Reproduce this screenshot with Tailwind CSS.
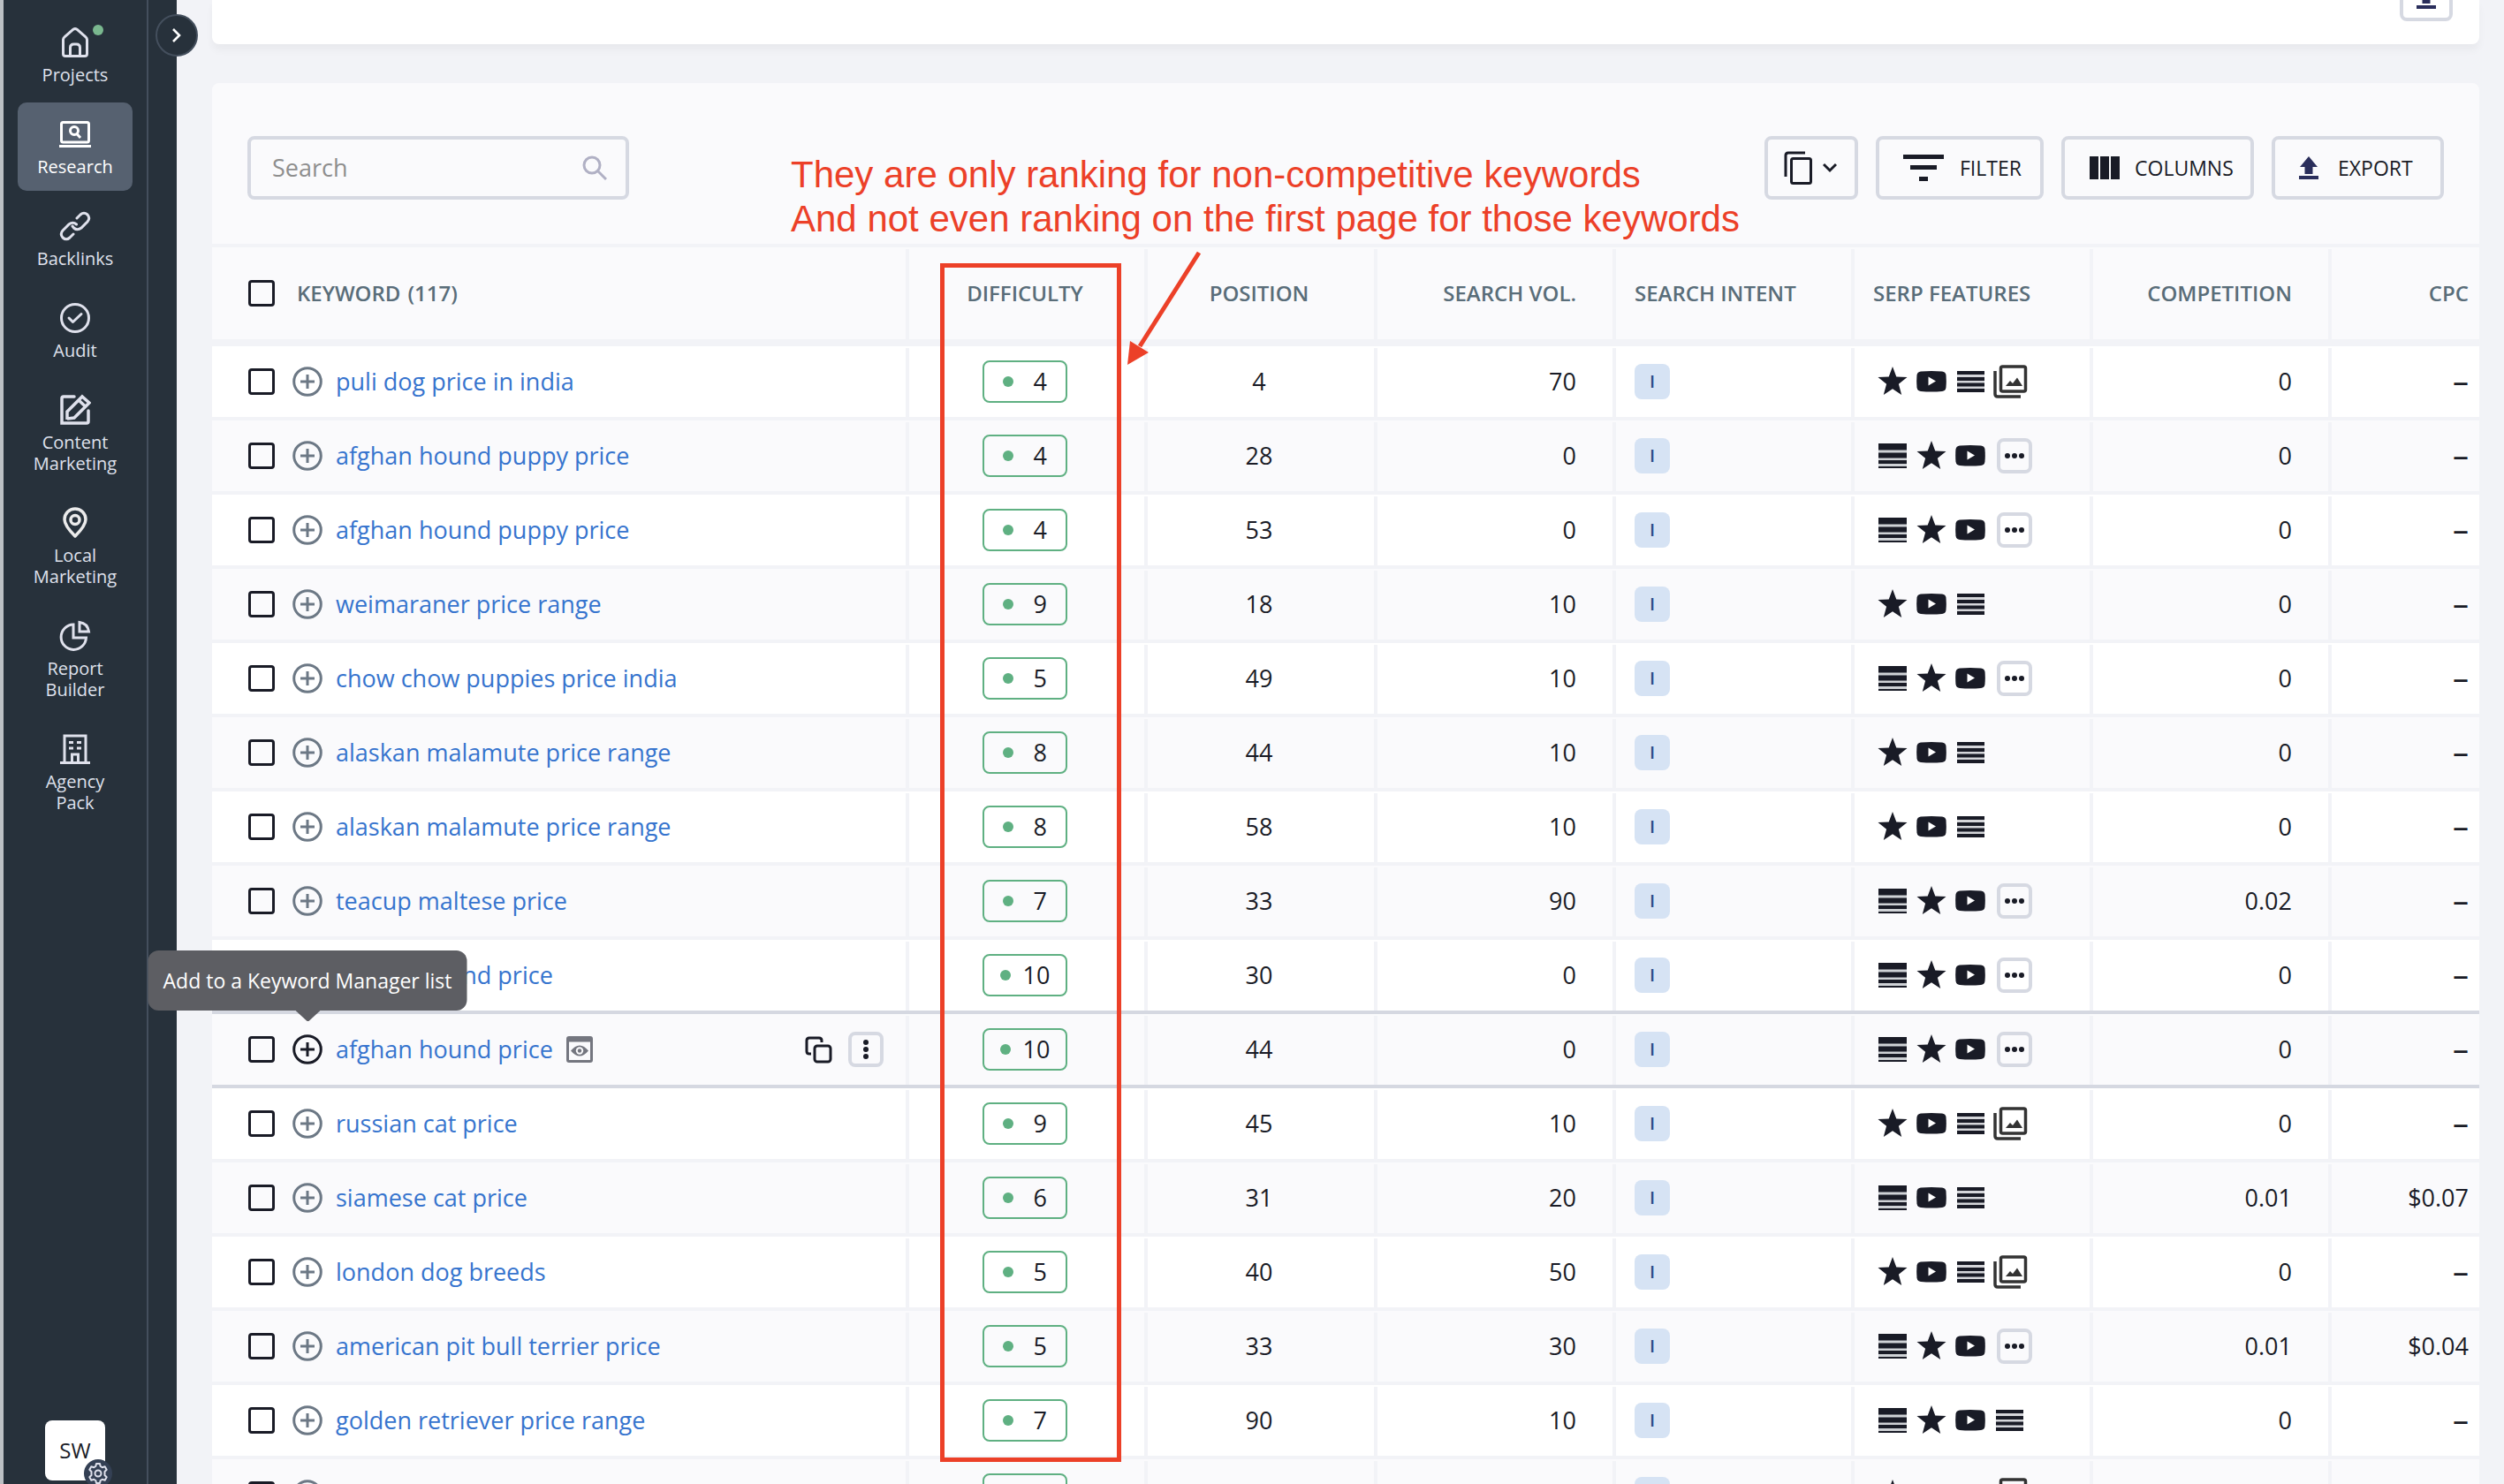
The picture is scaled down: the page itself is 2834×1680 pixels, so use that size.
<!DOCTYPE html>
<html lang="en">
<head>
<meta charset="utf-8">
<title>Keyword Research</title>
<script src="https://cdn.jsdelivr.net/npm/@tailwindcss/browser@4"></script>
</head>
<body class="relative flex h-screen overflow-hidden bg-[#f2f3f7] font-['Open_Sans','Noto_Sans',sans-serif] text-[27px] text-[#191b26]">

<svg class="hidden" aria-hidden="true">
  <symbol id="star" viewBox="0 0 36 36"><path fill="currentColor" d="M18 1l4.300 11.600 12.200.5-9.600 7.700 3.300 12.200L18 26.200 7.800 33l3.300-12.200-9.600-7.700 12.200-.5z"/></symbol>
  <symbol id="video" viewBox="0 0 36 36"><path fill="currentColor" d="M6 6.500q12-1 24 0 4 .5 4.500 4 .6 7 0 14-.5 4-4.500 4.500-12 1-24 0-4-.5-4.500-4.500-.6-7 0-14 .5-3.500 4.500-4z"/><path fill="#fff" d="M14.500 12.500v10l8.500-5z"/></symbol>
  <symbol id="lines" viewBox="0 0 36 36"><path fill="#d5d6da" d="M3 6h31v24H3z"/><path fill="currentColor" d="M3 6h31v4H3zm0 7h31v4H3zm0 6.500h31v4H3zM3 26h31v4H3z"/></symbol>
  <symbol id="thick" viewBox="0 0 36 36"><path fill="#cfd2d6" d="M2 4h32v28H2z"/><path fill="currentColor" d="M2 4h32v7.500H2zm0 10.500h32v6H2zm0 8.500h32v4H2zm0 7h32v2H2z"/></symbol>
  <symbol id="image" viewBox="0 0 40 40"><g fill="none" stroke="#333" stroke-width="3.500"><rect x="8.500" y="3" width="28" height="28" rx="2"/><path d="M2 8v26q0 3 3 3h26"/></g><path fill="#333" d="M14 25l5-6 3 3 5-6.500 6 9.500z"/></symbol>
  <symbol id="plus" viewBox="0 0 34 34"><g fill="none" stroke="currentColor" stroke-width="3"><circle cx="17" cy="17" r="15.300"/><path d="M17 9v16M9 17h16"/></g></symbol>
  <symbol id="upload" viewBox="0 0 22 26"><path fill="currentColor" d="M11 0l10 12h-5.500v8h-9v-8H1zM0 22h22v4H0z"/></symbol>
</svg>

<aside class="relative flex w-[200px] shrink-0 border-l-4 border-[#bcc0c4] bg-[#27313b]">
  <nav class="flex w-[164px] flex-col items-center border-r-2 border-[#444f5d] pt-3 text-[20px] leading-6 font-medium text-[#dfe1ec]">
    <div class="flex flex-1 flex-col gap-1 text-center">
      <a href="#" class="relative flex w-[130px] flex-col items-center gap-[7px] rounded-[10px] pt-[18px] pb-[15px]">
        <svg class="size-9" viewBox="0 0 36 36" fill="none" stroke="currentColor" stroke-width="3" stroke-linejoin="round"><path d="M4.500 15Q4.500 13 6 11.800L16 3.200q2-1.500 4 0L30 11.800q1.500 1.200 1.500 3.200V31q0 2.500-2.500 2.500H7Q4.500 33.500 4.500 31z"/><path d="M12.500 33V24q0-4 4-4h3q4 0 4 4v9"/></svg>
        <span class="absolute top-4 left-[85px] size-3 rounded-full bg-[#7ab88f]"></span>
        Projects</a>
      <a href="#" class="flex w-[130px] flex-col items-center gap-[7px] rounded-[10px] bg-[#566170] pt-[18px] pb-[15px] text-white">
        <svg class="size-9" viewBox="0 0 36 36" fill="none" stroke="currentColor" stroke-width="3"><rect x="2.500" y="4.500" width="31" height="22.500" rx="2"/><path d="M0 31.500h36"/><circle cx="17" cy="14" r="4.500"/><path d="M20 17.500l4 4.500"/></svg>
        Research</a>
      <a href="#" class="flex w-[130px] flex-col items-center gap-[7px] rounded-[10px] pt-[18px] pb-[15px]">
        <svg class="size-9" viewBox="0 0 36 36" fill="none" stroke="currentColor" stroke-width="3" stroke-linecap="round"><path d="M20 9l4-4q4-3.500 8 0 3.500 4 0 8l-7 7q-4.500 3.500-8.500 0l-1.500-2"/><path d="M16 27l-4 4q-4 3.500-8 0-3.500-4 0-8l7-7q4.500-3.500 8.500 0"/></svg>
        Backlinks</a>
      <a href="#" class="flex w-[130px] flex-col items-center gap-[7px] rounded-[10px] pt-[18px] pb-[15px]">
        <svg class="size-9" viewBox="0 0 36 36" fill="none" stroke="currentColor" stroke-width="3" stroke-linecap="round" stroke-linejoin="round"><circle cx="18" cy="18" r="15.500"/><path d="M11 18l4.500 4.500L25 13.500"/></svg>
        Audit</a>
      <a href="#" class="flex w-[130px] flex-col items-center gap-[7px] rounded-[10px] pt-[18px] pb-[15px]">
        <svg class="size-9" viewBox="0 0 36 36" fill="none" stroke="currentColor" stroke-width="3.500"><path stroke-linecap="round" d="M17 3H5Q3 3 3 5v28h28q2 0 2-2V19"/><path d="M9 29v-9L26 3l8 7-17 17-8 1zM22 7l8 7.500"/></svg>
        <span>Content<br>Marketing</span></a>
      <a href="#" class="flex w-[130px] flex-col items-center gap-[7px] rounded-[10px] pt-[18px] pb-[15px]">
        <svg class="size-9" viewBox="0 0 36 36" fill="none" stroke="#ebebeb" stroke-width="3.500" stroke-linejoin="round"><path d="M18 33Q6 21 6 14a12 12 0 0 1 24 0q0 7-12 19z"/><circle cx="18" cy="14.500" r="5"/></svg>
        <span>Local<br>Marketing</span></a>
      <a href="#" class="flex w-[130px] flex-col items-center gap-[7px] rounded-[10px] pt-[18px] pb-[15px]">
        <svg class="size-9" viewBox="0 0 36 36" fill="none" stroke="currentColor" stroke-width="3"><path d="M16 5v15h14.500A14.200 14.200 0 1 1 16 5z"/><path d="M23 2.500q9 1 10.500 10.500H23z"/></svg>
        <span>Report<br>Builder</span></a>
      <a href="#" class="flex w-[130px] flex-col items-center gap-[7px] rounded-[10px] pt-[18px] pb-[15px]">
        <svg class="size-9" viewBox="0 0 36 36" fill="none" stroke="currentColor" stroke-width="3"><path d="M6 33V3h24v30M1 33.500h34M14.500 33v-9h7v9M11 10.500h5M20 10.500h5M11 17h5M20 17h5"/></svg>
        <span>Agency<br>Pack</span></a>
    </div>
    <button type="button" class="relative mb-1 size-[68px] rounded-lg bg-white text-[24px] font-medium text-[#191b26]">SW
      <span class="absolute top-11 left-11 flex size-8 items-center justify-center rounded-full bg-[#344054] text-[#dfe1ec]">
        <svg class="size-6" viewBox="0 0 24 24" fill="none" stroke="currentColor" stroke-width="2" stroke-linejoin="round"><circle cx="12" cy="12" r="3.500"/><path d="M10 1h4l.7 3 2 1.200 3-.9 2 3.500L19.500 10v4l2.200 2.200-2 3.500-3-.9-2 1.200-.7 3h-4l-.7-3-2-1.200-3 .9-2-3.500L4.500 14v-4L2.300 7.800l2-3.500 3 .9 2-1.200z"/></svg>
      </span>
    </button>
  </nav>
  <button type="button" aria-label="Expand menu" class="absolute top-4 -right-6 flex size-12 items-center justify-center rounded-full border-2 border-[#444f5d] bg-[#27313b] text-white">
    <svg class="size-4" viewBox="0 0 16 16" fill="none" stroke="currentColor" stroke-width="2.600"><path d="M4 1l7 7-7 7"/></svg>
  </button>
</aside>

<main class="flex min-w-0 flex-1 flex-col gap-11 pr-7 pl-10">
  <section class="flex h-[50px] shrink-0 items-end justify-end rounded-b-lg bg-white pr-[30px] pb-[26px] shadow-[0_7px_8px_rgba(0,0,30,0.04)]">
    <button type="button" aria-label="Export chart" class="flex h-[60px] w-[60px] shrink-0 items-end justify-center rounded-lg border-4 border-[#d6d9e2] pb-2.5 text-[#2a2e5b]"><svg class="h-[26px] w-[22px]"><use href="#upload"/></svg></button>
  </section>

  <section class="rounded-t-lg bg-[#fafafc]">
    <div class="flex h-[186px] items-start justify-between border-b-4 border-[#f2f3f7] px-10 pt-[60px]">
      <label class="flex h-[72px] w-[432px] items-center rounded-lg border-4 border-[#d6d9e2] pr-[21px] pl-6">
        <input type="search" placeholder="Search" aria-label="Search keywords" class="min-w-0 flex-1 bg-transparent outline-none placeholder:text-[#8e8e8e]">
        <svg class="size-7 text-[#b0b0c4]" viewBox="0 0 28 28" fill="none" stroke="currentColor" stroke-width="3"><circle cx="11" cy="11" r="9"/><path d="M17.500 17.500L27 27"/></svg>
      </label>
      <div class="flex gap-5 text-[23px] font-medium">
        <button type="button" aria-label="Copy" class="flex h-[72px] w-[106px] items-center gap-3 rounded-lg border-4 border-[#d6d9e2] pl-[18px]">
          <svg class="h-10 w-8" viewBox="0 0 32 40" fill="none" stroke="currentColor" stroke-width="3"><path d="M2 30V6q0-3 3-3h19"/><rect x="8.500" y="9.500" width="22" height="28" rx="2"/></svg>
          <svg class="size-4" viewBox="0 0 16 16" fill="none" stroke="currentColor" stroke-width="3"><path d="M1 4l7 7 7-7"/></svg>
        </button>
        <button type="button" class="flex h-[72px] w-[190px] items-center gap-[18px] rounded-lg border-4 border-[#d6d9e2] pl-[27px]">
          <svg class="h-[30px] w-[46px]" viewBox="0 0 46 30" fill="currentColor"><path d="M0 0h46v5H0zM8 12h30v5H8zM18 25h10v5H18z"/></svg>FILTER</button>
        <button type="button" class="flex h-[72px] w-[218px] items-center gap-[17px] rounded-lg border-4 border-[#d6d9e2] pl-7">
          <svg class="h-[26px] w-[34px]" viewBox="0 0 34 26" fill="currentColor"><path d="M0 0h10v26H0zM12 0h10v26H12zM24 0h10v26H24z"/></svg>COLUMNS</button>
        <button type="button" class="flex h-[72px] w-[195px] items-center gap-[22px] rounded-lg border-4 border-[#d6d9e2] pl-[27px]">
          <svg class="h-[26px] w-[22px] text-[#2a2e5b]"><use href="#upload"/></svg>EXPORT</button>
      </div>
    </div>

    <table class="w-full table-fixed border-separate border-spacing-0">
      <colgroup><col><col class="w-[270px]"><col class="w-[260px]"><col class="w-[270px]"><col class="w-[270px]"><col class="w-[270px]"><col class="w-[270px]"><col class="w-[167px]"></colgroup>
      <thead>
        <tr class="text-[24px] text-[#596d79] *:h-[112px] *:border-b-8 *:border-[#f2f3f7] *:bg-[linear-gradient(#f2f3f7,#f2f3f7)] *:bg-[length:4px_calc(100%-2px)] *:bg-right-bottom *:bg-no-repeat *:font-semibold">
          <th class="pl-[41px] text-left"><label class="flex items-center gap-[25px]"><input type="checkbox" aria-label="Select all" class="size-[30px] appearance-none rounded-sm border-[3px] border-[#191b26]"><span class="flex gap-2"><span>KEYWORD</span><span>(117)</span></span></label></th>
          <th class="pr-2 text-center">DIFFICULTY</th>
          <th class="pr-2 text-center">POSITION</th>
          <th class="pr-[45px] text-right">SEARCH VOL.</th>
          <th class="pl-[21px] text-left">SEARCH INTENT</th>
          <th class="pl-[21px] text-left">SERP FEATURES</th>
          <th class="pr-[45px] text-right">COMPETITION</th>
          <th class="bg-none! pr-3 text-right">CPC</th>
        </tr>
      </thead>
      <tbody id="rows"></tbody>
    </table>
  </section>
</main>

<div class="pointer-events-none absolute top-[298px] left-[1064px] h-[1357px] w-[205px] border-[5px] border-[#ec4028]"></div>
<p class="pointer-events-none absolute top-[173px] left-[895px] font-['Liberation_Sans',Arial,sans-serif] text-[42px] leading-[50px] whitespace-nowrap text-[#ec4028]">They are only ranking for non-competitive keywords<br>And not even ranking on the first page for those keywords</p>
<svg class="pointer-events-none absolute top-[280px] left-[1270px] h-[140px] w-[100px]" viewBox="0 0 100 140"><path d="M87 6L20 112" stroke="#ec4028" stroke-width="5"/><path d="M6 133l3-27 21 13z" fill="#ec4028"/></svg>

<script>
  // keyword, difficulty, position, volume, SERP features, competition, CPC
  const data = [
    ['puli dog price in india', 4, 4, 70, 'star video lines image', '0', '–'],
    ['afghan hound puppy price', 4, 28, 0, 'thick star video more', '0', '–'],
    ['afghan hound puppy price', 4, 53, 0, 'thick star video more', '0', '–'],
    ['weimaraner price range', 9, 18, 10, 'star video lines', '0', '–'],
    ['chow chow puppies price india', 5, 49, 10, 'thick star video more', '0', '–'],
    ['alaskan malamute price range', 8, 44, 10, 'star video lines', '0', '–'],
    ['alaskan malamute price range', 8, 58, 10, 'star video lines', '0', '–'],
    ['teacup maltese price', 7, 33, 90, 'thick star video more', '0.02', '–'],
    ['afghan hound price', 10, 30, 0, 'thick star video more', '0', '–'],
    ['afghan hound price', 10, 44, 0, 'thick star video more', '0', '–'],
    ['russian cat price', 9, 45, 10, 'star video lines image', '0', '–'],
    ['siamese cat price', 6, 31, 20, 'thick video lines', '0.01', '$0.07'],
    ['london dog breeds', 5, 40, 50, 'star video lines image', '0', '–'],
    ['american pit bull terrier price', 5, 33, 30, 'thick star video more', '0.01', '$0.04'],
    ['golden retriever price range', 7, 90, 10, 'thick star video lines', '0', '–'],
    ['', '', '', '', 'star video lines image', '', ''],
  ];
  const active = 9;
  const feature = name => name === 'more'
    ? '<button type="button" aria-label="More features" class="ml-1 flex size-10 items-center justify-center rounded-lg border-4 border-[#d6d9e2]"><svg class="h-2 w-6" viewBox="0 0 24 8" fill="currentColor"><circle cx="4" cy="4" r="3"/><circle cx="12" cy="4" r="3"/><circle cx="20" cy="4" r="3"/></svg></button>'
    : name === 'image'
      ? '<svg class="size-10"><use href="#image"/></svg>'
      : `<svg class="size-9"><use href="#${name}"/></svg>`;
  const tooltip = '<span role="tooltip" class="absolute bottom-full left-1/2 z-10 mb-[27px] flex h-[68px] w-[361px] -translate-x-1/2 items-center justify-center rounded-xl bg-[#5d5e63] text-[23px] whitespace-nowrap text-white">Add to a Keyword Manager list<svg class="absolute top-full left-1/2 h-3 w-7 -translate-x-1/2" viewBox="0 0 28 12" fill="#5d5e63"><path d="M0 0h28L15 12h-2z"/></svg></span>';
  const eye = '<svg class="ml-[15px] size-[30px] text-[#74767f]" viewBox="0 0 30 30"><path fill="currentColor" fill-rule="evenodd" d="M3 0h24q3 0 3 3v24q0 3-3 3H3q-3 0-3-3V3q0-3 3-3zM3 6.500V27h24V6.500z"/><path fill="currentColor" d="M5 16.500q10-12 20 0-10 12-20 0z"/><circle cx="15" cy="16.500" r="4.200" fill="#fafafc"/><circle cx="15" cy="16.500" r="2.200" fill="currentColor"/></svg>';
  const actions = '<span class="ml-auto flex items-center gap-[18px] pr-[29px]"><button type="button" aria-label="Copy keyword"><svg class="block size-[31px]" viewBox="0 0 31 31" fill="none" stroke="currentColor" stroke-width="3"><path d="M7 20H5q-3 0-3-3V5q0-3 3-3h11q3 0 3 3v2"/><rect x="11" y="11" width="18" height="18" rx="3"/></svg></button><button type="button" aria-label="Keyword menu" class="flex size-10 items-center justify-center rounded-lg border-4 border-[#d6d9e2]"><svg class="h-6 w-2" viewBox="0 0 8 24" fill="currentColor"><circle cx="4" cy="4" r="3"/><circle cx="4" cy="12" r="3"/><circle cx="4" cy="20" r="3"/></svg></button></span>';

  document.getElementById('rows').innerHTML = data.map(([kw, diff, pos, vol, serp, comp, cpc], i) => `
    <tr class="${i === active || i === active - 1 ? '*:border-[#d5d8e1]' : '*:border-[#f2f3f7]'} ${i % 2 ? 'bg-[#fafafc]' : 'bg-white'} *:h-[84px] *:border-b-4 *:bg-[linear-gradient(#f2f3f7,#f2f3f7)] *:bg-[length:4px_calc(100%-2px)] *:bg-right-bottom *:bg-no-repeat">
      <td class="pl-[41px]"><div class="flex items-center">
        <input type="checkbox" aria-label="Select ${kw}" class="size-[30px] appearance-none rounded-sm border-[3px] border-[#191b26]">
        <button type="button" aria-label="Add ${kw} to a list" class="relative ml-5 ${i === active ? 'text-[#191b26]' : 'text-[#6c7885]'}"><svg class="block size-[34px]"><use href="#plus"/></svg>${i === active ? tooltip : ''}</button>
        <a href="#" class="ml-[15px] whitespace-nowrap text-[#3674ce]">${kw}</a>${i === active ? eye + actions : ''}
      </div></td>
      <td class="pr-2"><span class="mx-auto flex h-12 w-24 items-center justify-center gap-3.5 rounded-lg border-2 border-[#5fb082]"><span class="size-3 rounded-full bg-[#5fb082]"></span><span class="min-w-6 text-right">${diff}</span></span></td>
      <td class="pr-2 text-center">${pos}</td>
      <td class="pr-[45px] text-right">${vol}</td>
      <td class="pl-[21px]"><span class="flex size-10 items-center justify-center rounded-lg bg-[#d6e3f4] text-[20px] font-semibold text-[#2b4d8a]">I</span></td>
      <td class="pl-[25px]"><div class="flex items-center gap-2">${serp.split(' ').map(feature).join('')}</div></td>
      <td class="pr-[45px] text-right">${comp}</td>
      <td class="bg-none! pr-3 text-right ${cpc === '–' ? 'text-[36px] leading-none' : ''}">${cpc}</td>
    </tr>`).join('');
</script>
</body>
</html>
